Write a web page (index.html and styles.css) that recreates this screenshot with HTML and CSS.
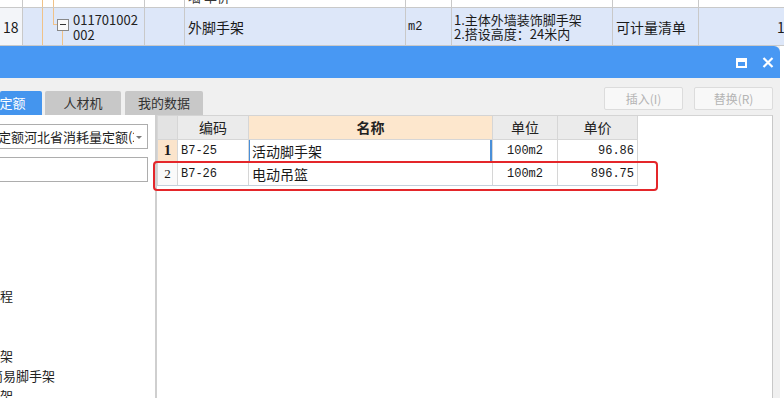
FILE: index.html
```html
<!DOCTYPE html>
<html lang="zh-CN">
<head>
<meta charset="UTF-8" />
<title>查询定额</title>
<link rel="stylesheet" href="styles.css">
</head>
<body>

<!-- Таблица сметы за диалогом -->
<div class="sheet">
  <div class="row row-prev">
    <div class="cell c-no"></div>
    <div class="cell c-tree"><span class="vline v1"></span><span class="vline v2"></span></div>
    <div class="cell c-type"></div>
    <div class="cell c-name"><span class="cut">墙 单价 ·· ·</span></div>
    <div class="cell c-unit"></div>
    <div class="cell c-desc"></div>
    <div class="cell c-kind"></div>
    <div class="cell c-qty"></div>
  </div>
  <div class="row row-cur">
    <div class="cell c-no">18</div>
    <div class="cell c-tree">
      <span class="vline v1"></span>
      <span class="elbow"></span>
      <span class="vline v3"></span>
      <span class="minus"></span>
      <span class="code">011701002<br>002</span>
    </div>
    <div class="cell c-type"></div>
    <div class="cell c-name">外脚手架</div>
    <div class="cell c-unit mono">m2</div>
    <div class="cell c-desc">1.主体外墙装饰脚手架<br>2.搭设高度：24米内</div>
    <div class="cell c-kind">可计量清单</div>
    <div class="cell c-qty">1</div>
  </div>
</div>

<!-- Диалог -->
<div class="dialog">
  <div class="titlebar">
    <svg class="tb-icon" width="11" height="10" viewBox="0 0 11 10">
      <rect x="1" y="1" width="9" height="8" fill="none" stroke="#fff" stroke-width="2"/>
      <rect x="1" y="1" width="9" height="3" fill="#fff"/>
    </svg>
    <svg class="tb-icon" width="12" height="11" viewBox="0 0 12 11">
      <path d="M1.5 1 L10.5 10 M10.5 1 L1.5 10" stroke="#fff" stroke-width="2.2"/>
    </svg>
  </div>

  <div class="toolbar">
    <div class="tabs">
      <div class="tab active"><span class="tab-cut">定额</span></div>
      <div class="tab tab-rcj">人材机</div>
      <div class="tab tab-my">我的数据</div>
    </div>
    <div class="actions">
      <button class="btn" disabled>插入(I)</button>
      <button class="btn" disabled>替换(R)</button>
    </div>
  </div>

  <div class="content">
    <div class="left">
      <div class="combo">
        <span class="combo-text">定额河北省消耗量定额(2012)</span>
        <span class="combo-arrow"></span>
      </div>
      <div class="search"></div>
      <div class="tree">
        <div class="node"><span class="n1">工程</span></div>
        <div class="node"></div>
        <div class="node"></div>
        <div class="node"><span class="n1">手架</span></div>
        <div class="node"><span class="n2">简易脚手架</span></div>
        <div class="node"><span class="n1">手架</span></div>
      </div>
    </div>

    <div class="grid-panel">
      <table class="grid">
        <tr>
          <th class="g-no"></th>
          <th class="g-code">编码</th>
          <th class="g-name sel">名称</th>
          <th class="g-unit">单位</th>
          <th class="g-price">单价</th>
        </tr>
        <tr>
          <td class="g-no cur">1</td>
          <td class="g-code mono">B7-25</td>
          <td class="g-name focus">活动脚手架</td>
          <td class="g-unit mono">100m2</td>
          <td class="g-price mono">96.86</td>
        </tr>
        <tr class="last">
          <td class="g-no">2</td>
          <td class="g-code mono">B7-26</td>
          <td class="g-name">电动吊篮</td>
          <td class="g-unit mono">100m2</td>
          <td class="g-price mono">896.75</td>
        </tr>
      </table>
    </div>

    <div class="mark"></div>
  </div>
</div>

</body>
</html>
```

FILE: styles.css
```css
* {
    margin: 0;
    padding: 0;
    box-sizing: border-box;
}

body {
    width: 784px;
    height: 398px;
    overflow: hidden;
    background: #fff;
    font-family: "Noto Sans CJK SC", "DejaVu Sans", sans-serif;
    color: #1a1a1a;
}

.mono {
    font-family: "Liberation Mono", "Noto Sans CJK SC", monospace;
}

/* Таблица сметы */
.sheet {
    height: 46px;
    overflow: hidden;
}
.row {
    display: flex;
    border-bottom: 1px solid #c9c9c9;
}
.row-prev {
    height: 8px;
    overflow: hidden;
}
.row-cur {
    height: 38px;
    background: #dde7f9;
}
.cell {
    border-right: 1px solid #c9c9c9;
    position: relative;
    display: flex;
    align-items: center;
    font-size: 14px;
    line-height: 16px;
    overflow: hidden;
    flex-shrink: 0;
}
.c-no { width: 23px; padding-left: 3px; background: #f3f5f9; }
.row-prev .c-no { background: #fff; }
.c-tree { width: 122px; }
.c-type { width: 40px; }
.c-name { width: 221px; padding-left: 3px; }
.c-unit { width: 46px; padding-left: 2px; font-size: 12px; }
.c-desc { width: 161px; padding-left: 2px; font-size: 13px; line-height: 14px; }
.c-kind { width: 86px; padding-left: 3px; }
.c-qty { width: 100px; padding-left: 78px; border-right: none; }

.cut {
    font-size: 13px;
    margin-top: -14px;
    color: #333;
}

/* Линии дерева */
.vline {
    position: absolute;
    width: 1px;
    background: #f0c288;
}
.v1 { left: 19px; top: 0; bottom: 0; }
.v2 { left: 30px; top: 0; bottom: 0; }
.v3 { left: 39px; top: 23px; bottom: 0; }
.elbow {
    position: absolute;
    left: 30px;
    top: 0;
    width: 5px;
    height: 17px;
    border-left: 1px solid #f0c288;
    border-bottom: 1px solid #f0c288;
}
.minus {
    position: absolute;
    left: 34px;
    top: 11px;
    width: 12px;
    height: 12px;
    border: 1px solid #888;
    background: #fafafa;
}
.minus::after {
    content: "";
    position: absolute;
    left: 2px;
    top: 4px;
    width: 6px;
    height: 1px;
    background: #333;
}
.code {
    margin-left: 50px;
    font-size: 13px;
    line-height: 15px;
    color: #222;
}

/* Диалог */
.dialog {
    width: 780px;
    height: 352px;
    background: #f0f0f0;
    display: flex;
    flex-direction: column;
}
.titlebar {
    flex-shrink: 0;
    height: 32px;
    background: #4898f3;
    border-top-right-radius: 6px;
    display: flex;
    justify-content: flex-end;
    align-items: center;
    gap: 15px;
    padding-right: 6px;
    padding-top: 1px;
}

.toolbar {
    flex-shrink: 0;
    height: 37px;
    display: flex;
    justify-content: space-between;
    align-items: flex-end;
    padding-right: 7px;
}
.tabs {
    display: flex;
    gap: 3px;
}
.tab {
    height: 24px;
    background: #c8c8c8;
    color: #333;
    font-size: 13px;
    line-height: 24px;
    text-align: center;
    border-radius: 2px 2px 0 0;
}
.tab.active {
    width: 42px;
    background: #4495ee;
    color: #fff;
    overflow: hidden;
}
.tab-cut {
    display: block;
    margin-left: -17px;
}
.tab-rcj { width: 76px; }
.tab-my { width: 78px; margin-left: 1px; }

.actions {
    display: flex;
    gap: 11px;
    align-self: flex-start;
    margin-top: 9px;
}
.btn {
    width: 79px;
    height: 23px;
    background: #f8f8f8;
    border: 1px solid #dcdcdc;
    border-radius: 2px;
    color: #b4b4b4;
    font-family: "Noto Sans CJK SC", "DejaVu Sans", sans-serif;
    font-size: 12px;
}

.content {
    flex: 1;
    min-height: 0;
    display: flex;
    position: relative;
    padding-right: 7px;
    overflow: hidden;
}

/* Левая панель */
.left {
    width: 157px;
    background: #fff;
    border-right: 2px solid #cfcfcf;
    padding-top: 9px;
    overflow: hidden;
}
.combo {
    width: 148px;
    height: 25px;
    border: 1px solid #adadad;
    border-left: none;
    display: flex;
    align-items: center;
    position: relative;
}
.combo-text {
    width: 136px;
    margin-left: -2px;
    white-space: nowrap;
    overflow: hidden;
    font-size: 13px;
    color: #222;
}
.combo-arrow {
    position: absolute;
    right: 5px;
    top: 11px;
    border-left: 3px solid transparent;
    border-right: 3px solid transparent;
    border-top: 3px solid #777;
}
.search {
    width: 148px;
    height: 25px;
    margin-top: 8px;
    border: 1px solid #adadad;
    border-left: none;
}
.tree {
    margin-top: 104px;
}
.node {
    height: 20px;
    line-height: 20px;
    font-size: 13px;
    white-space: nowrap;
    color: #222;
}
.n1 { margin-left: -13px; }
.n2 { margin-left: -10px; }

/* Таблица расценок */
.grid-panel {
    flex: 1;
    background: #fff;
    border-top: 1px solid #d4d4d4;
    border-right: 1px solid #c8c8c8;
}
.grid {
    border-collapse: collapse;
    table-layout: fixed;
    width: 480px;
}
.grid th,
.grid td {
    height: 23px;
    border: 1px solid #d6d6d6;
    border-top: none;
    padding: 0 3px;
    white-space: nowrap;
    overflow: hidden;
}
.grid th {
    background: #ebebeb;
    font-weight: normal;
    font-size: 14px;
    color: #222;
    text-align: center;
}
.grid th.sel {
    background: #fde7cd;
    font-weight: bold;
}
.grid td {
    font-size: 14px;
}
.grid td.mono {
    font-size: 12px;
}
.g-no { width: 20px; text-align: center; }
.grid th.g-no { background: #e3e3e3; }
.grid td.g-no {
    font-family: "Liberation Serif", serif;
    font-size: 13px;
    background: #fafafa;
    padding: 0;
}
.grid td.cur {
    background: #fbe4cb;
    font-weight: bold;
    font-size: 15px;
}
.g-code { width: 71px; }
.g-name { width: 244px; }
.g-unit { width: 65px; text-align: center; }
.g-price { width: 80px; text-align: right; }
.grid td.focus {
    box-shadow: inset 1px 0 0 #4a8fd8, inset -2px 0 0 #4a8fd8;
}
.grid tr.last td {
    border-bottom-color: #c4d0dc;
}

/* Красная рамка выделения */
.mark {
    position: absolute;
    left: 153px;
    top: 46px;
    width: 505px;
    height: 30px;
    border: 2px solid #e4262a;
    border-radius: 4px;
}
```
